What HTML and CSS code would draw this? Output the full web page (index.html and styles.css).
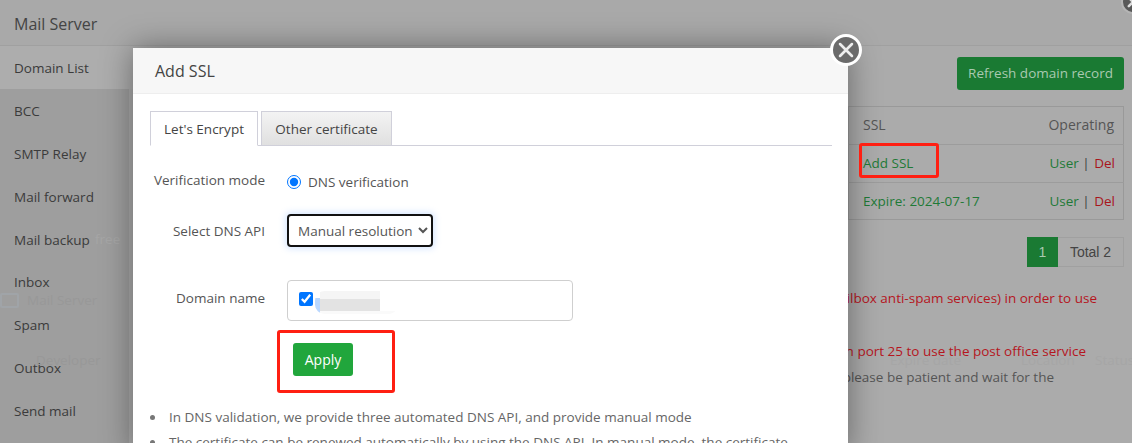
FILE: index.html
```html
<!DOCTYPE html>
<html lang="en">
<head>
<meta charset="utf-8">
<title>Add SSL</title>
<link rel="stylesheet" href="styles.css">
</head>
<body>
<div class="page">
  <header class="top"><h1 class="top-title">Mail Server</h1></header>
  <div class="main">
    <nav class="side">
      <a class="side-item active">Domain List</a>
      <a class="side-item">BCC</a>
      <a class="side-item">SMTP Relay</a>
      <a class="side-item">Mail forward</a>
      <a class="side-item">Mail backup</a>
      <a class="side-item">Inbox</a>
      <a class="side-item">Spam</a>
      <a class="side-item">Outbox</a>
      <a class="side-item">Send mail</a>
    </nav>
    <section class="content">
      <div class="toolbar"><button class="refresh">Refresh domain record</button></div>
      <table class="domains">
        <thead><tr><th>SSL</th><th class="right">Operating</th></tr></thead>
        <tbody>
          <tr><td class="ok">Add SSL</td><td class="right"><span class="ok">User</span> | <span class="del">Del</span></td></tr>
          <tr><td class="ok">Expire: 2024-07-17</td><td class="right"><span class="ok">User</span> | <span class="del">Del</span></td></tr>
        </tbody>
      </table>
      <div class="pager"><span class="pg-cur">1</span><span class="pg-total">Total 2</span></div>
      <p class="note n1 red">mailbox anti-spam services) in order to use</p>
      <p class="note n2 red">on port 25 to use the post office service</p>
      <p class="note n3">please be patient and wait for the</p>
    </section>
  </div>
  <div class="ghost g1">free</div>
  <div class="ghost g2"><span class="g-icon"></span>Mail Server</div>
  <div class="ghost g3">Developer</div>
  <div class="ghost g4">Expire date</div>
  <div class="ghost g5">Location</div>
  <div class="ghost g6">Status</div>
</div>
<div class="overlay">
  <span class="corner-close"><svg viewBox="0 0 24 24" class="x"><path d="M7 7l10 10M17 7L7 17"/></svg></span>
  <span class="mark m1"></span>
  <div class="modal">
    <span class="modal-close"><svg viewBox="0 0 24 24" class="x"><path d="M6.500 6.500l11 11M17.500 6.500l-11 11"/></svg></span>
    <div class="modal-head">Add SSL</div>
    <div class="modal-body">
      <div class="tabs"><span class="tab on">Let's Encrypt</span><span class="tab">Other certificate</span></div>
      <div class="row r-mode">
        <span class="label">Verification mode</span>
        <label class="radio"><input type="radio" checked> DNS verification</label>
      </div>
      <div class="row r-api">
        <span class="label">Select DNS API</span>
        <select class="api"><option>Manual resolution</option></select>
      </div>
      <div class="row r-domain">
        <span class="label lift2">Domain name</span>
        <div class="domain-box"><input type="checkbox" checked class="chk"><span class="blur"></span></div>
      </div>
      <div class="apply-wrap">
        <span class="mark m2"></span>
        <button class="apply">Apply</button>
      </div>
      <ul class="tips">
        <li>In DNS validation, we provide three automated DNS API, and provide manual mode</li>
        <li>The certificate can be renewed automatically by using the DNS API. In manual mode, the certificate</li>
      </ul>
    </div>
  </div>
</div>
</body>
</html>
```
FILE: styles.css
```css
* { box-sizing: border-box; }
html, body { margin: 0; height: 100%; overflow: hidden; }
body { font-family: "Open Sans", "Noto Sans", sans-serif; font-size: 13.500px; color: #333; background: #ababab; }

.page { height: 443px; display: flex; flex-direction: column; position: relative; overflow: hidden; background: #ababab; color: #3d3d3d; }
.top { height: 46px; flex: none; border-bottom: 1px solid #a0a0a0; padding: 14px 14px 0; background: #a9a9a9; }
.top-title { margin: 0; font-size: 16px; font-weight: 400; line-height: 20px; color: #444; }
.main { flex: 1; display: flex; min-height: 0; }

.side { width: 129px; flex: none; background: #9e9e9e; display: flex; flex-direction: column; position: relative; z-index: 1; }
.side-item { height: 42.875px; flex: none; padding: 12px 14px 0; line-height: 20px; color: #3b3b3b; }
.side-item.active { background: #adadad; margin-right: -4px; }

.content { flex: 1; position: relative; padding: 11px 8px 0 0; display: flex; flex-direction: column; align-items: flex-end; }
.toolbar { display: flex; justify-content: flex-end; }
.refresh { width: 167px; height: 33px; border: 0; border-radius: 3px; background: #1a7a33; color: #a9c9b0; font: inherit; padding: 0 0 2px; }
.domains { width: 276px; margin-top: 16px; border-collapse: collapse; border: 1px solid #999; }
.domains th, .domains td { height: 38px; padding: 0 8px 2px 14px; border-bottom: 1px solid #9c9c9c; font-weight: 400; text-align: left; }
.domains th { font-size: 14px; color: #555; padding-right: 9px; }
.domains th.right, .domains td.right { text-align: right; }
.domains tbody tr:last-child td { height: 37px; border-bottom: 0; padding-bottom: 0; }
.ok { color: #1f7a37; }
.del { color: #a8151c; margin-left: 1px; }
.pager { display: flex; margin-top: 17px; height: 30px; border: 1px solid #a0a0a0; border-left: 0; font-family: "Liberation Sans", sans-serif; font-size: 14px; line-height: 28px; }
.pg-cur { width: 31px; margin-top: -1px; height: 30px; line-height: 30px; background: #1a7a33; color: #a9c9b0; text-align: center; }
.pg-total { width: 65px; text-align: center; color: #444; }
.note { margin: 0; white-space: nowrap; line-height: 20px; color: #555; }
.red { color: #b5161e; }
.n1 { margin-top: 21px; margin-right: 27px; }
.n2 { margin-top: 33px; margin-right: 38px; }
.n3 { margin-top: 6px; margin-right: 70px; }

.ghost { position: absolute; color: #a6a6a6; line-height: 20px; white-space: nowrap; }
.g1 { left: 95px; top: 229px; z-index: 2; }
.g2 { left: 0; top: 290px; display: flex; align-items: center; gap: 8px; z-index: 2; color: #989898; }
.g-icon { width: 19px; height: 15px; border: 2px solid #a0a4a8; border-radius: 2px; }
.g3 { left: 36px; top: 350px; z-index: 2; color: #989898; }
.g4 { left: 890px; top: 350px; }
.g5 { left: 1021px; top: 350px; }
.g6 { left: 1095px; top: 350px; }

.overlay { position: absolute; inset: 0; overflow: hidden; z-index: 3; }
.corner-close { position: absolute; left: 1121px; top: -10px; width: 24px; height: 24px; border-radius: 50%; background: #585858; border: 2px solid #b5b5b5; }
.x { display: block; width: 100%; height: 100%; }
.x path { fill: none; stroke: #ddd; stroke-width: 3; stroke-linecap: round; }
.modal-close { position: absolute; left: 697px; top: -14px; width: 32px; height: 32px; border-radius: 50%; background: #6b6b6b; border: 3px solid #fff; z-index: 2; }
.modal-close .x path { stroke: #eee; stroke-width: 2.400; }

.mark { position: absolute; border: 3px solid #ff1f12; border-radius: 3px; pointer-events: none; }
.m1 { left: 859px; top: 143px; width: 80px; height: 35px; z-index: 3; }
.m2 { left: -16px; top: -13px; width: 118px; height: 63px; }

.modal { position: absolute; left: 133px; top: 48px; width: 715px; background: #fff; box-shadow: 0 0 30px rgba(0,0,0,.4); }
.modal-head { height: 46px; padding: 13px 22px 0; background: #f7f7f7; border-bottom: 1px solid #eeeeee; font-size: 16px; line-height: 20px; color: #444; }
.modal-body { padding: 17px 16px 0 17px; }
.tabs { display: flex; gap: 3px; height: 35px; border-bottom: 1px solid #d0d0da; }
.tab { height: 35px; padding: 0; line-height: 34px; border: 1px solid #d0d0da; background: linear-gradient(#f3f3f3, #e0e0e0); color: #444; white-space: nowrap; text-align: center; width: 131px; }
.tab.on { width: 108px; background: #fff; border-bottom-color: #fff; }

.row { display: flex; }
.label { width: 115px; flex: none; text-align: right; color: #555; line-height: 20px; }
.r-mode { margin-top: 24px; height: 22px; align-items: flex-start; }
.radio { margin-left: 22px; display: flex; align-items: center; gap: 7px; margin-top: 2px; line-height: 20px; color: #555; }
.radio input { margin: 0; width: 14px; height: 14px; accent-color: #0075ff; }
.r-api { margin-top: 22px; align-items: center; height: 33px; }
.api { margin-left: 22px; width: 146px; height: 33px; border: 2px solid #111; border-radius: 4px; background: #fff; font: inherit; color: #555; padding: 1px 0 0 5px; box-shadow: 0 0 6px 2px rgba(130,180,255,.3); outline: 0; }
.r-domain { margin-top: 33px; height: 41px; }
.lift2 { margin-top: 8px; }
.domain-box { margin-left: 22px; width: 286px; height: 41px; border: 1px solid #cfcfcf; border-radius: 4px; display: flex; align-items: flex-start; padding: 11px 0 0 11px; }
.chk { margin: 0; width: 14px; height: 14px; accent-color: #0075ff; }
.blur { display: block; width: 84px; height: 23px; margin: -1px 0 0 2px; border-radius: 10px 12px 12px 10px; filter: blur(.5px); background:
  linear-gradient(#b9d7ff, #b9d7ff) 0 7px / 5px 16px no-repeat,
  linear-gradient(#e3e3e3, #e3e3e3) 5px 8px / 60px 12px no-repeat,
  linear-gradient(#f5f5f5, #f5f5f5) 5px 0 / 60px 8px no-repeat,
  linear-gradient(#fafafa, #fafafa) 5px 20px / 79px 3px no-repeat; }
.apply-wrap { position: relative; margin: 22px 0 0 143px; width: 60px; height: 33px; }
.apply { display: block; width: 60px; height: 33px; border: 0; border-radius: 3px; background: #21a63c; color: #fff; font: inherit; font-size: 14px; padding: 0; }
.tips { margin: 29px 0 0; padding: 0; list-style: none; color: #666; line-height: 25px; white-space: nowrap; }
.tips li { display: flex; align-items: center; }
.tips li::before { content: ""; flex: none; width: 5px; height: 5px; margin-right: 14px; border-radius: 50%; background: #777; }
```
